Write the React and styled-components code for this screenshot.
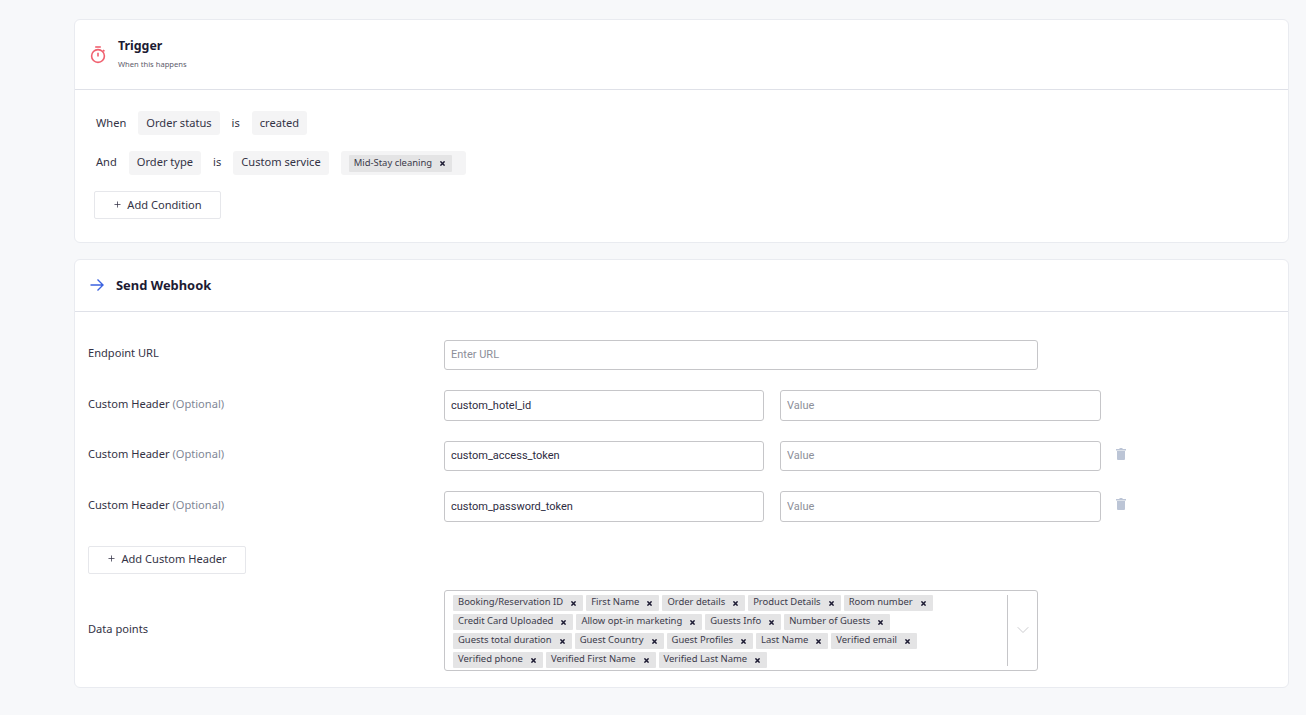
import React from 'react';
import styled, { createGlobalStyle } from 'styled-components';
import { ChevronDown, Plus } from 'lucide-react';

const GlobalStyle = createGlobalStyle`
  html, body {
    margin: 0;
    background: #f7f8fa;
    font-family: "Noto Sans", "Open Sans", sans-serif;
    color: #2e2c3f;
  }
  * { box-sizing: border-box; }
`;

const Page = styled.div`
  display: flex;
  flex-direction: column;
  gap: 16px;
  padding: 19px 17px 27px 74px;
  min-height: 715px;
`;
const Card = styled.section`
  background: #fff;
  border: 1px solid #e9ebf0;
  border-radius: 6px;
`;
const CardHeader = styled.header`
  display: flex;
  align-items: center;
  height: ${props => props.h}px;
  padding: 0 0 ${props => props.pb || 0}px 15px;
  gap: ${props => props.gap}px;
  border-bottom: 1px solid #dfe1e8;
`;
const Title = styled.h2`
  margin: 0;
  font-size: ${props => props.size || 12.9}px;
  line-height: 18px;
  font-weight: 700;
  color: #1d1b33;
`;
const SubTitle = styled.p`
  margin: 4px 0 3px;
  font-size: 7.6px;
  line-height: 10px;
  color: #5c5b6b;
`;
const TriggerBody = styled.div`
  display: flex;
  flex-direction: column;
  align-items: flex-start;
  gap: 16px;
  padding: 21px 20px 23px 19px;
`;
const ConditionRow = styled.div`
  --lift: ${props => props.lift}px;
  display: flex;
  align-items: center;
  gap: 12px;
  height: 24px;
  margin-left: 2px;
  font-size: 11.1px;
  color: #333245;
`;
const Word = styled.span`
  padding-bottom: var(--lift);
`;
const Chip = styled.span`
  display: flex;
  align-items: center;
  height: 24px;
  padding: 0 8px var(--lift);
  background: #f4f4f5;
  border-radius: 3px;
  white-space: nowrap;
`;
const MultiChip = styled(Chip)`
  width: 125px;
  padding-bottom: 0;
`;
const Tag = styled.span`
  display: inline-flex;
  align-items: center;
  justify-content: space-between;
  gap: 8px;
  height: ${props => (props.tall ? 17 : 16)}px;
  padding: 0 7px 2px 5px;
  background: #e4e4e5;
  border-radius: 1px;
  font-size: 9.45px;
  color: #3b3a4a;
  white-space: nowrap;
`;
const CrossIcon = styled.svg`
  width: 5px;
  height: 5px;
  flex: none;
  margin-top: 3px;
  stroke: #1d1b33;
  stroke-width: 1.5;
`;
const OutlineButton = styled.button`
  display: flex;
  align-items: center;
  justify-content: center;
  gap: 5px;
  width: ${props => props.w}px;
  height: 28px;
  padding: 0 6px 2px;
  background: #fff;
  border: 1px solid #e6e7eb;
  border-radius: 2px;
  font-family: inherit;
  font-size: 11.1px;
  color: #333245;
`;
const WebhookBody = styled.div`
  display: grid;
  grid-template-columns: 356px 320px 337px 1fr;
  row-gap: 20px;
  align-items: center;
  padding: 27.75px 0 16.25px 13px;
`;
const Label = styled.label`
  font-size: 11.1px;
  color: #333245;
  padding-bottom: 5px;
`;
const DataLabel = styled(Label)`
  padding-bottom: 3px;
`;
const Optional = styled.span`
  color: #7f8796;
`;
const Input = styled.input`
  height: 30.5px;
  width: ${props => props.w}px;
  padding: 0 6px 1px;
  background: #fff;
  border: 1px solid #c6c6c9;
  border-radius: 3px;
  font-family: Roboto, sans-serif;
  font-size: 11px;
  color: #2e2c3f;
  outline: none;
  &::placeholder {
    color: #8d8f99;
  }
`;
const UrlInput = styled(Input)`
  grid-column: 2 / 4;
`;
const ValueCell = styled.div`
  display: flex;
  justify-content: flex-end;
`;
const TrashButton = styled.span`
  display: flex;
  padding: 0 0 5px 15px;
  color: #bcc5d6;
`;
const AddRow = styled.div`
  grid-column: 1 / -1;
  margin-top: 4px;
  margin-bottom: -4px;
`;
const MultiSelect = styled.div`
  grid-column: 2 / 4;
  display: flex;
  width: 594px;
  height: 81px;
  padding: 4px 0 4px 8px;
  border: 1px solid #c6c6c9;
  border-radius: 3px;
`;
const TagList = styled.div`
  flex: 1;
  display: flex;
  flex-wrap: wrap;
  align-content: flex-start;
  gap: 3px;
`;
const SelectToggle = styled.div`
  display: flex;
  align-items: center;
  justify-content: center;
  width: 30px;
  border-left: 1px solid #c6c6c9;
  color: #c6c6c9;
`;

const Cross = () => (
  <CrossIcon viewBox="0 0 5 5">
    <path d="M0.4 0.4 L4.6 4.6 M4.6 0.4 L0.4 4.6" />
  </CrossIcon>
);

const TrashIcon = () => (
  <svg width="10" height="12" viewBox="0 0 10 12" fill="currentColor">
    <path d="M3.5 0 h3 v1 h3.5 v1.4 h-10 v-1.4 h3.5 z M1 3 h8 v8 a1 1 0 0 1 -1 1 h-6 a1 1 0 0 1 -1 -1 z" />
  </svg>
);

const StopwatchIcon = () => (
  <svg width="16" height="18" viewBox="0 0 16 18" fill="none" stroke="#f0606f" strokeWidth="1.6">
    <path d="M5.2 1 H10.8" />
    <circle cx="8" cy="10" r="6.4" />
    <path d="M8 6.8 V10.4" />
    <path d="M13 4 L14.4 5.4" />
  </svg>
);

const ArrowIcon = () => (
  <svg width="14" height="12" viewBox="0 0 14 12" fill="none" stroke="#3b62e0" strokeWidth="1.4">
    <path d="M0.5 6 H13 M7.5 0.5 L13 6 L7.5 11.5" />
  </svg>
);

const DATA_POINTS = [
  'Booking/Reservation ID',
  'First Name',
  'Order details',
  'Product Details',
  'Room number',
  'Credit Card Uploaded',
  'Allow opt-in marketing',
  'Guests Info',
  'Number of Guests',
  'Guests total duration',
  'Guest Country',
  'Guest Profiles',
  'Last Name',
  'Verified email',
  'Verified phone',
  'Verified First Name',
  'Verified Last Name'
];

const HEADERS = [
  { name: 'custom_hotel_id' },
  { name: 'custom_access_token', removable: true },
  { name: 'custom_password_token', removable: true }
];

export default function App() {
  return (
    <Page>
      <GlobalStyle />
      <Card>
        <CardHeader h={70} gap={12}>
          <StopwatchIcon />
          <div>
            <Title size={12.4}>Trigger</Title>
            <SubTitle>When this happens</SubTitle>
          </div>
        </CardHeader>
        <TriggerBody>
          <ConditionRow lift={2}>
            <Word>When</Word>
            <Chip>Order status</Chip>
            <Word>is</Word>
            <Chip>created</Chip>
          </ConditionRow>
          <ConditionRow lift={4}>
            <Word>And</Word>
            <Chip>Order type</Chip>
            <Word>is</Word>
            <Chip>Custom service</Chip>
            <MultiChip>
              <Tag tall>
                Mid-Stay cleaning <Cross />
              </Tag>
            </MultiChip>
          </ConditionRow>
          <OutlineButton w={127}>
            <Plus size={9} strokeWidth={2} /> Add Condition
          </OutlineButton>
        </TriggerBody>
      </Card>
      <Card>
        <CardHeader h={52} gap={12} pb={2}>
          <ArrowIcon />
          <Title>Send Webhook</Title>
        </CardHeader>
        <WebhookBody>
          <Label>Endpoint URL</Label>
          <UrlInput w={594} placeholder="Enter URL" />
          <span />
          {HEADERS.map(header => (
            <React.Fragment key={header.name}>
              <Label>
                Custom Header <Optional>(Optional)</Optional>
              </Label>
              <Input w={320} defaultValue={header.name} />
              <ValueCell>
                <Input w={321} placeholder="Value" />
              </ValueCell>
              {header.removable ? (
                <TrashButton>
                  <TrashIcon />
                </TrashButton>
              ) : (
                <span />
              )}
            </React.Fragment>
          ))}
          <AddRow>
            <OutlineButton w={158}>
              <Plus size={9} strokeWidth={2} /> Add Custom Header
            </OutlineButton>
          </AddRow>
          <DataLabel>Data points</DataLabel>
          <MultiSelect>
            <TagList>
              {DATA_POINTS.map(point => (
                <Tag key={point}>
                  {point} <Cross />
                </Tag>
              ))}
            </TagList>
            <SelectToggle>
              <ChevronDown size={20} strokeWidth={1.1} />
            </SelectToggle>
          </MultiSelect>
        </WebhookBody>
      </Card>
    </Page>
  );
}
